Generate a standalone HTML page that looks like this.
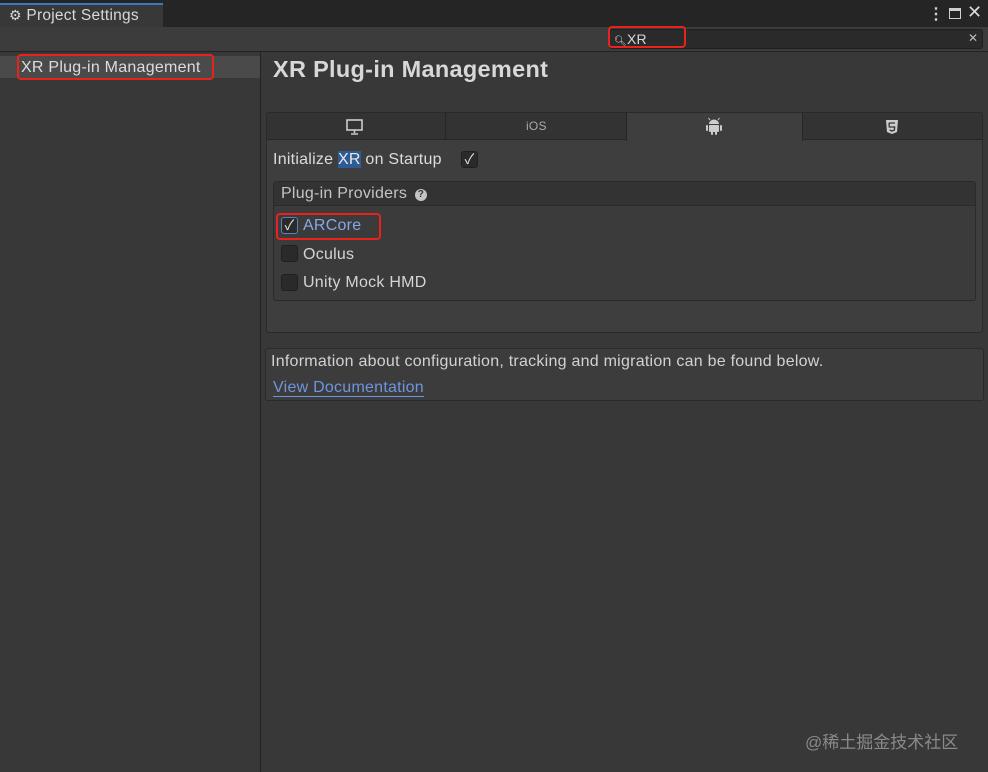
<!DOCTYPE html>
<html><head><meta charset="utf-8"><style>
*{box-sizing:border-box;margin:0;padding:0}
body{width:988px;height:772px;background:#383838;font-family:"Liberation Sans","Noto Sans CJK SC",sans-serif;color:#d2d2d2;position:relative;overflow:hidden;font-size:16px;letter-spacing:0.25px}
.abs{position:absolute}
.red{position:absolute;border:2.5px solid #e8231c;border-radius:4px}
.cb{position:absolute;width:17px;height:17px;background:#2a2a2a;border:1px solid #202020;border-radius:3px;color:#e6e6e6;font-size:14px;line-height:15px;text-align:center}
</style></head><body>
<div class="abs" style="left:0;top:0;width:988px;height:27px;background:#252525"></div>
<div class="abs" style="left:0;top:3px;width:163px;height:24px;background:#383838;border-top:2px solid #3a79bb"></div>
<div class="abs" style="left:9px;top:7px;font-size:15.5px;color:#d8d8d8"><span style="font-size:14px">⚙</span> Project Settings</div>
<div class="abs" style="left:928px;top:4px;font-size:16px;color:#d0d0d0;font-weight:bold">⋮</div>
<div class="abs" style="left:949px;top:8px;width:12px;height:11px;border:1.5px solid #d0d0d0;border-top-width:3px"></div>
<div class="abs" style="left:967px;top:2px;font-size:18px;color:#d8d8d8">✕</div>
<div class="abs" style="left:0;top:27px;width:988px;height:25px;background:#3c3c3c;border-bottom:1px solid #232323"></div>
<div class="abs" style="left:609px;top:29px;width:374px;height:20px;background:#2a2a2a;border:1px solid #202020;border-radius:3px"></div>
<div class="abs" style="left:614px;top:31px;font-size:14px;color:#d8d8d8"><span style="font-size:10px">🔍︎</span>XR</div>
<div class="abs" style="left:968px;top:31px;font-size:12px;color:#bbb">✕</div>
<div class="red" style="left:608px;top:26px;width:78px;height:22px"></div>
<div class="abs" style="left:260px;top:52px;width:1px;height:720px;background:#232323"></div>
<div class="abs" style="left:0;top:56px;width:260px;height:22px;background:#4a4a4a"></div>
<div class="abs" style="left:21px;top:59px;font-size:16px;color:#dcdcdc">XR Plug-in Management</div>
<div class="red" style="left:17px;top:54px;width:197px;height:26px"></div>
<div class="abs" style="left:273px;top:56px;font-size:23.5px;font-weight:bold;color:#d8d8d8;letter-spacing:0.3px">XR Plug-in Management</div>
<div class="abs" style="left:266px;top:112px;width:717px;height:221px;background:#3e3e3e;border:1px solid #2a2a2a;border-radius:3px"></div>
<div class="abs" style="left:267px;top:113px;width:715px;height:27px;background:#333;border-bottom:1px solid #262626"></div>
<div class="abs" style="left:445px;top:113px;width:1px;height:27px;background:#262626"></div>
<div class="abs" style="left:626px;top:113px;width:177px;height:28px;background:#3e3e3e;border-left:1px solid #262626;border-right:1px solid #262626"></div>
<svg class="abs" style="left:345px;top:118px" width="20" height="18"><rect x="2" y="2" width="15" height="10" fill="none" stroke="#ccc" stroke-width="1.6"/><path d="M9.5 12v3M6 16h7" stroke="#ccc" stroke-width="1.6"/></svg>
<div class="abs" style="left:526px;top:119px;font-size:12px;color:#aaa">iOS</div>
<svg class="abs" style="left:705px;top:116px" width="18" height="20"><path d="M5 4l-1.5-2M13 4l1.5-2" stroke="#ccc" stroke-width="1"/><path d="M4 8a5 4.5 0 0110 0z" fill="#ccc"/><rect x="4" y="9" width="10" height="7" rx="1" fill="#ccc"/><rect x="1" y="9" width="2" height="6" rx="1" fill="#ccc"/><rect x="15" y="9" width="2" height="6" rx="1" fill="#ccc"/><rect x="6" y="15" width="2" height="4" rx="1" fill="#ccc"/><rect x="10" y="15" width="2" height="4" rx="1" fill="#ccc"/></svg>
<svg class="abs" style="left:885px;top:116px" width="14" height="20"><path d="M1 4h12l-1 12-5 2-5-2z" fill="#ccc"/><path d="M4 7h6M4 7l.3 4h5.4l-.3 3-2.4 1-2.4-1" stroke="#333" stroke-width="1.3" fill="none"/></svg>
<div class="abs" style="left:273px;top:151px;color:#dcdcdc">Initialize <span style="background:#2d5b94;color:#e8e8e8">XR</span> on Startup</div>
<div class="cb" style="left:461px;top:151px">✓</div>
<div class="abs" style="left:273px;top:181px;width:703px;height:120px;border:1px solid #2a2a2a;border-radius:3px;background:#3b3b3b"></div>
<div class="abs" style="left:274px;top:182px;width:701px;height:24px;background:#333;border-bottom:1px solid #2a2a2a"></div>
<div class="abs" style="left:281px;top:185px;color:#c4c4c4">Plug-in Providers <span style="display:inline-block;width:12px;height:12px;border-radius:6px;background:#c4c4c4;color:#333;font-size:10px;line-height:12px;text-align:center;font-weight:bold;vertical-align:1px;margin-left:3px;letter-spacing:0">?</span></div>
<div class="cb" style="left:281px;top:217px;border-color:#5b7fc0">✓</div>
<div class="abs" style="left:303px;top:217px;color:#86a8e6">ARCore</div>
<div class="red" style="left:276px;top:213px;width:105px;height:27px"></div>
<div class="cb" style="left:281px;top:245px"></div>
<div class="abs" style="left:303px;top:246px;color:#d4d4d4">Oculus</div>
<div class="cb" style="left:281px;top:274px"></div>
<div class="abs" style="left:303px;top:274px;color:#d4d4d4">Unity Mock HMD</div>
<div class="abs" style="left:265px;top:348px;width:719px;height:53px;background:#3c3c3c;border:1px solid #2a2a2a;border-radius:3px"></div>
<div class="abs" style="left:271px;top:353px;color:#d2d2d2">Information about configuration, tracking and migration can be found below.</div>
<div class="abs" style="left:273px;top:379px;color:#6e95e0;border-bottom:1px solid #6e95e0;line-height:17px">View Documentation</div>
<div class="abs" style="left:805px;top:728px;font-size:17px;color:#8a8a8a;letter-spacing:0">@稀土掘金技术社区</div>
</body></html>
